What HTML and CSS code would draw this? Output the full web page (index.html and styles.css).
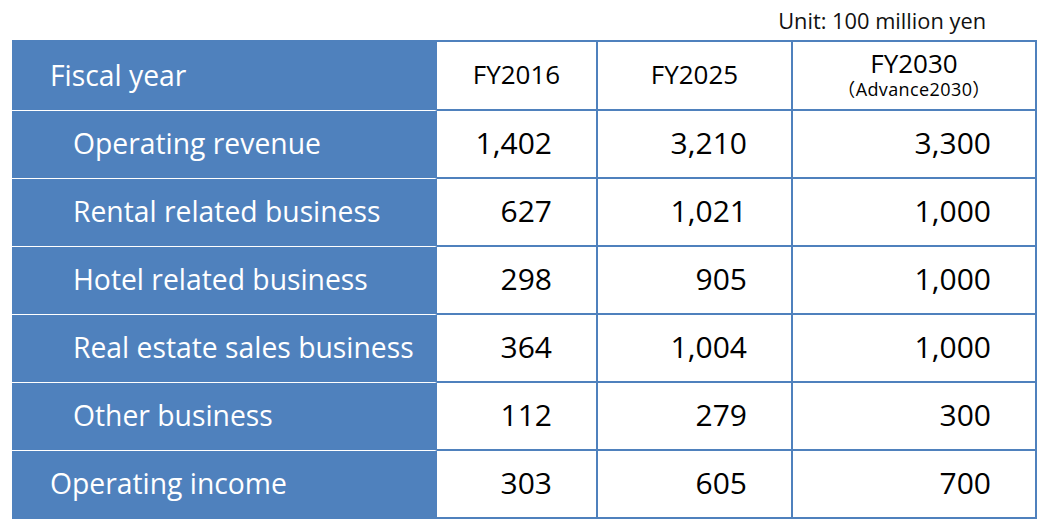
FILE: index.html
```html
<!DOCTYPE html>
<html>
<head>
<meta charset="utf-8">
<link rel="stylesheet" href="styles.css">
</head>
<body>
<div class="page">
  <div class="unit">Unit: 100 million yen</div>
  <table class="tbl">
    <colgroup>
      <col class="c0"><col class="c1"><col class="c2"><col class="c3">
    </colgroup>
    <thead>
      <tr class="head">
        <th class="lbl top">Fiscal year</th>
        <th class="yr">FY2016</th>
        <th class="yr">FY2025</th>
        <th class="yr"><div class="main">FY2030</div><div class="sub">（Advance2030）</div></th>
      </tr>
    </thead>
    <tbody>
      <tr><td class="lbl ind">Operating revenue</td><td class="num">1,402</td><td class="num">3,210</td><td class="num">3,300</td></tr>
      <tr><td class="lbl ind">Rental related business</td><td class="num">627</td><td class="num">1,021</td><td class="num">1,000</td></tr>
      <tr><td class="lbl ind">Hotel related business</td><td class="num">298</td><td class="num">905</td><td class="num">1,000</td></tr>
      <tr><td class="lbl ind">Real estate sales business</td><td class="num">364</td><td class="num">1,004</td><td class="num">1,000</td></tr>
      <tr><td class="lbl ind">Other business</td><td class="num">112</td><td class="num">279</td><td class="num">300</td></tr>
      <tr class="last"><td class="lbl top">Operating income</td><td class="num">303</td><td class="num">605</td><td class="num">700</td></tr>
    </tbody>
  </table>
</div>
</body>
</html>
```
FILE: styles.css
```css
html, body {
  margin: 0;
  padding: 0;
  background: #ffffff;
}
body {
  font-family: "Open Sans", "Noto Sans CJK JP", sans-serif;
  color: #000;
}
.page {
  padding: 7px 0 0 12px;
  width: 1024px;
}
.unit {
  font-size: 21.8px;
  line-height: 28px;
  height: 33px;
  text-align: right;
  padding-right: 50px;
  color: #111;
}
.tbl {
  border-collapse: separate;
  border-spacing: 0;
  table-layout: fixed;
  width: 1025px;
}
.c0 { width: 425px; }
.c1 { width: 161px; }
.c2 { width: 195px; }
.c3 { width: 244px; }
.tbl th, .tbl td {
  padding: 0 0 3px 0;
  height: 63px;
  line-height: 30px;
  border-right: 2px solid #4f81bd;
  border-bottom: 2px solid #4f81bd;
  vertical-align: middle;
}
.head th { height: 64px; border-top: 2px solid #4f81bd; }
.tbl .lbl {
  background: #4f81bd;
  color: #fff;
  text-align: left;
  font-weight: normal;
  font-size: 28.3px;
  border-bottom: 1px solid #fff;
  height: 64px;
}
.tbl .head .lbl { height: 65px; }
.tbl .last .lbl { border-bottom: 2px solid #4f81bd; height: 63px; }
.lbl.top { padding-left: 38px; }
.lbl.ind { padding-left: 61px; }
.yr {
  font-weight: normal;
  font-size: 26px;
  text-align: center;
}
.yr .main {
  line-height: 29px;
}
.yr .sub {
  font-size: 18px;
  line-height: 22px;
  letter-spacing: 0.4px;
}
.num {
  text-align: right;
  font-size: 30px;
  padding-right: 44px !important;
}
```
